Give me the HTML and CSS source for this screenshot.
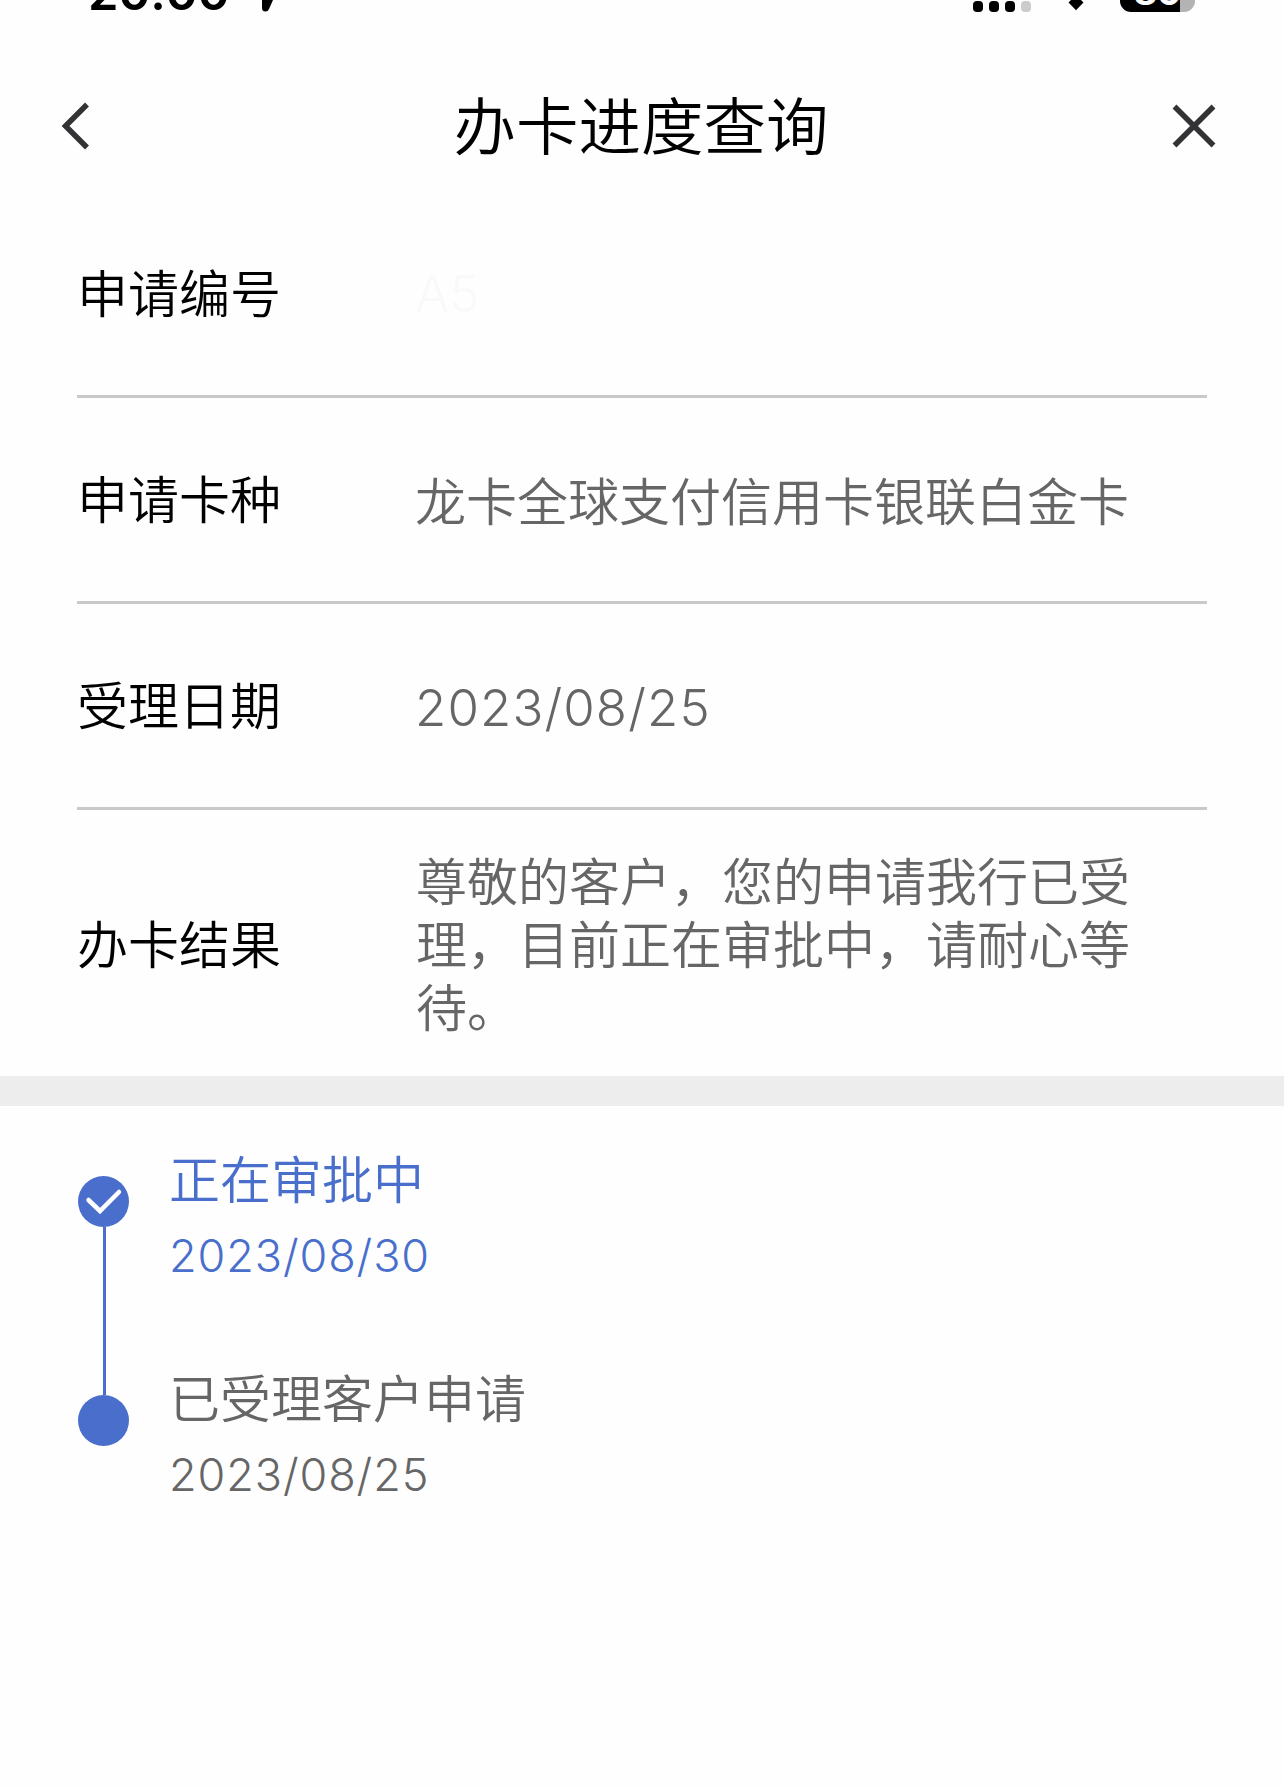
FILE: index.html
```html
<!DOCTYPE html>
<html lang="zh-CN">
<head>
    <meta charset="UTF-8">
    <meta name="viewport" content="width=device-width, initial-scale=1.0">
    <title>办卡进度查询</title>
    <link rel="stylesheet" href="styles.css">
</head>
<body>

    <!-- Status Bar -->
    <div class="status-bar">
        <span class="time">20:00</span>
        <svg class="location" width="16" height="12" viewBox="0 0 16 12">
            <path d="M0 0H11L7 9Q6 11.500 3.500 11.500Q0 11.500 0 8Z" fill="#000"/>
        </svg>
        <div class="signal">
            <i></i><i></i><i></i><i class="off"></i>
        </div>
        <svg class="wifi" width="16" height="11" viewBox="0 0 16 11">
            <path d="M3 0H13L15.500 2.500L8 10.200L0.500 2.500Z" fill="#000"/>
        </svg>
        <div class="battery"><span>80</span></div>
    </div>

    <!-- Header -->
    <header>
        <svg width="30" height="48" viewBox="0 0 30 48">
            <path d="M26 2.500L4.500 24L26 45.500" fill="none" stroke="#333335" stroke-width="5.500"/>
        </svg>
        <h1>办卡进度查询</h1>
        <svg width="44" height="44" viewBox="0 0 44 44">
            <path d="M2.500 2.500L41.500 41.500M41.500 2.500L2.500 41.500" fill="none" stroke="#333335" stroke-width="5.500"/>
        </svg>
    </header>

    <!-- Application Info -->
    <section class="info">
        <div class="row">
            <span class="label">申请编号</span>
            <span class="value masked">A5</span>
        </div>
        <div class="row">
            <span class="label">申请卡种</span>
            <span class="value">龙卡全球支付信用卡银联白金卡</span>
        </div>
        <div class="row">
            <span class="label">受理日期</span>
            <span class="value date">2023/08/25</span>
        </div>
        <div class="row result">
            <span class="label">办卡结果</span>
            <span class="value">尊敬的客户，您的申请我行已受理，目前正在审批中，请耐心等待。</span>
        </div>
    </section>

    <!-- Progress Timeline -->
    <section class="timeline">
        <div class="step active">
            <div class="marker">
                <svg class="dot" width="51" height="51" viewBox="0 0 51 51">
                    <circle cx="25.500" cy="25.500" r="25.500" fill="#496ecc"/>
                    <path d="M10.500 24L22 35L41 16" fill="none" stroke="#fff" stroke-width="4.500" stroke-linecap="round"/>
                </svg>
                <div class="line"></div>
            </div>
            <div class="text">
                <p class="name">正在审批中</p>
                <p class="day">2023/08/30</p>
            </div>
        </div>
        <div class="step">
            <div class="marker">
                <svg class="dot" width="51" height="51" viewBox="0 0 51 51">
                    <circle cx="25.500" cy="25.500" r="25.500" fill="#496ecc"/>
                </svg>
            </div>
            <div class="text">
                <p class="name">已受理客户申请</p>
                <p class="day">2023/08/25</p>
            </div>
        </div>
    </section>

</body>
</html>
```
FILE: styles.css
```css
/* General Reset */
* {
    margin: 0;
    padding: 0;
    box-sizing: border-box;
}

body {
    font-family: "Noto Sans CJK SC", sans-serif;
    font-size: 51px;
    font-weight: 350;
    background-color: #fefefe;
    color: #000;
    height: 1788px;
    overflow: hidden;
}

/* Status Bar */
.status-bar {
    display: flex;
    height: 20px;
    padding-left: 88px;
    overflow: hidden;
}

.time {
    width: 174px;
    margin-top: -42px;
    font-family: Inter, sans-serif;
    font-size: 49px;
    font-weight: 600;
    line-height: 70px;
    letter-spacing: -0.3px;
}

.signal {
    display: flex;
    gap: 6px;
    margin-left: 695px;
    padding-top: 1px;
}

.signal i {
    width: 10px;
    height: 11px;
    border-radius: 4px;
    background-color: #000;
}

.signal .off {
    background-color: #ccc;
}

.wifi {
    margin-left: 37px;
}

.battery {
    width: 75px;
    height: 36px;
    margin: -24px 0 0 36px;
    border-radius: 11px;
    background: linear-gradient(to right, #000 60px, #b3b3b3 60px);
    color: #fff;
    font-family: Inter, sans-serif;
    font-size: 36px;
    font-weight: 700;
    line-height: 33px;
    text-align: center;
}

/* Header */
header {
    display: flex;
    justify-content: space-between;
    align-items: center;
    height: 172px;
    padding: 52px 68px 12px 61px;
}

header h1 {
    margin: -6px 0 0 19px;
    font-size: 62.5px;
    font-weight: 350;
    line-height: 90px;
}

/* Application Info */
.info {
    border-bottom: 30px solid #ededed;
}

.row {
    display: flex;
    align-items: center;
    height: 206px;
    margin: 0 77px;
    border-bottom: 3px solid #c9c9c9;
}

.row.result {
    height: 266px;
    border-bottom: none;
}

.label {
    width: 338px;
    padding-bottom: 5px;
}

.result .label {
    width: 339px;
    padding-bottom: 2px;
}

.value {
    width: 720px;
    color: #666;
    line-height: 63px;
}

.result .value {
    padding-bottom: 2px;
}

.date {
    padding-top: 4px;
    font-family: Inter, sans-serif;
    letter-spacing: 1.1px;
}

.masked {
    font-family: Inter, sans-serif;
    font-weight: 300;
    color: #f9f9f9;
}

/* Timeline */
.timeline {
    padding: 33px 77px;
    color: #666;
}

.step {
    display: flex;
    height: 219px;
}

.active {
    color: #496ecc;
}

.marker {
    display: flex;
    flex-direction: column;
    align-items: flex-start;
    width: 53px;
    margin: 37px 38px -37px 1px;
}

.dot {
    flex: none;
}

.line {
    width: 3px;
    flex: 1;
    margin-left: 25px;
    background-color: #496ecc;
}

.name {
    line-height: 76px;
}

.day {
    padding-top: 3px;
    font-family: Inter, sans-serif;
    font-size: 45px;
    line-height: 76px;
    letter-spacing: 0.9px;
}
```
